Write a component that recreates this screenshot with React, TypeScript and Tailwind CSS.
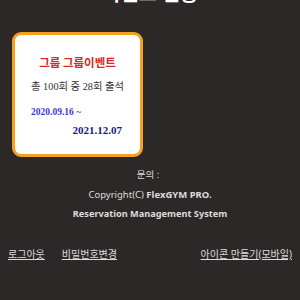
export default function App() {
  return (
    <div className="w-[300px] h-[300px] overflow-hidden bg-[#2d2828] flex flex-col" style={{ fontFamily: '"Noto Sans", "Noto Sans CJK KR", sans-serif' }}>
      <div className="mt-[-20px] h-[26px] text-center text-white font-bold text-[20px] leading-[26px]" style={{ fontFamily: '"Noto Sans CJK KR", sans-serif' }}>
        이벤트 현황
      </div>
      <div className="mt-[26px] ml-[12px] w-[131px] h-[125px] border-[3px] border-[#f5a020] rounded-[9px] bg-white flex flex-col">
        <div className="mt-[19px] text-center text-[11.5px] leading-[16px] font-bold text-[#d42a2a]" style={{ fontFamily: '"Noto Sans CJK KR", sans-serif' }}>
          그룹 그룹이벤트
        </div>
        <div className="mt-[10px] text-center text-[10.3px] leading-[14px] text-[#333]" style={{ fontFamily: '"Liberation Serif", "Noto Sans CJK KR", serif' }}>
          총 100회 중 28회 출석
        </div>
        <div className="mt-[11px] pl-[16px] text-[9.5px] leading-[14px] font-bold text-[#3b3bd6]" style={{ fontFamily: '"Liberation Serif", serif' }}>
          2020.09.16 ~
        </div>
        <div className="mt-[3px] pr-[18px] text-right text-[11px] leading-[16px] font-bold text-[#1a1a7a]" style={{ fontFamily: '"Liberation Serif", serif' }}>
          2021.12.07
        </div>
      </div>
      <div className="mt-[10px] flex flex-col items-center text-[#dcdcdc]">
        <div className="text-[9.5px] leading-[16px] ml-[-4px]">문의 :</div>
        <div className="mt-[4px] text-[9.5px] leading-[16px]">
          Copyright(C) <span className="font-bold">FlexGYM PRO.</span>
        </div>
        <div className="mt-[3px] text-[9.2px] leading-[16px] font-bold">Reservation Management System</div>
      </div>
      <div className="mt-[24px] flex items-center px-[8px] text-[10px] leading-[16px] text-[#dcdcdc]">
        <a className="underline">로그아웃</a>
        <a className="underline ml-[17px]">비밀번호변경</a>
        <a className="underline ml-auto">아이콘 만들기(모바일)</a>
      </div>
    </div>
  );
}
